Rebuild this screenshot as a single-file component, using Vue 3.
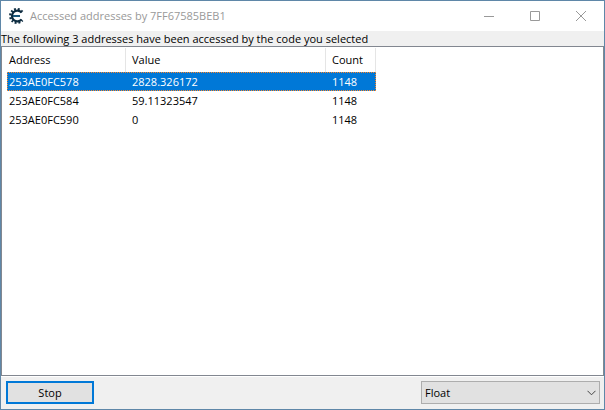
<template>
  <div class="window">
    <header class="titlebar">
      <svg class="logo" viewBox="0 0 16 16" aria-hidden="true">
        <path
          d="M13.4 3.8A6.8 6.8 0 1 0 13.4 12.2"
          fill="none"
          stroke="#0d2c40"
          stroke-width="2.4"
          stroke-dasharray="1.8 1.7"
        />
        <path
          d="M12.6 4.6A5.4 5.4 0 1 0 12.6 11.4"
          fill="none"
          stroke="#0d2c40"
          stroke-width="2.2"
        />
        <path d="M4 8h7" stroke="#17567a" stroke-width="2" />
      </svg>
      <h1 class="title">Accessed addresses by 7FF67585BEB1</h1>
      <div class="controls">
        <button type="button" class="control" aria-label="Minimize">
          <svg class="glyph" viewBox="0 0 10 10"><path d="M0 5.5h10" /></svg>
        </button>
        <button type="button" class="control" aria-label="Maximize">
          <svg class="glyph" viewBox="0 0 10 10"><path d="M.5 .5h9v9h-9z" /></svg>
        </button>
        <button type="button" class="control" aria-label="Close">
          <svg class="glyph" viewBox="0 0 10 10"><path d="M0 0L10 10M10 0L0 10" /></svg>
        </button>
      </div>
    </header>

    <p class="info">The following {{ rows.length }} addresses have been accessed by the code you selected</p>

    <main class="list">
      <table class="table">
        <thead>
          <tr>
            <th class="col-address">Address</th>
            <th class="col-value">Value</th>
            <th class="col-count">Count</th>
          </tr>
        </thead>
        <tbody>
          <tr
            v-for="row in rows"
            :key="row.address"
            :class="{ selected: row.address === selected }"
            @click="selected = row.address"
          >
            <td>{{ row.address }}</td>
            <td>{{ row.value }}</td>
            <td>{{ row.count }}</td>
          </tr>
        </tbody>
      </table>
    </main>

    <footer class="footer">
      <button type="button" class="stop">Stop</button>
      <div class="type">
        <select v-model="valueType" class="type-select" aria-label="Value type">
          <option v-for="t in valueTypes" :key="t">{{ t }}</option>
        </select>
        <svg class="chevron" viewBox="0 0 9 6" aria-hidden="true"><path d="M.5 .8l4 4l4-4" /></svg>
      </div>
    </footer>
  </div>
</template>

<script setup>
import { ref } from 'vue'

const rows = [
  { address: '253AE0FC578', value: '2828.326172', count: 1148 },
  { address: '253AE0FC584', value: '59.11323547', count: 1148 },
  { address: '253AE0FC590', value: '0', count: 1148 }
]

const valueTypes = ['Byte', '2 Bytes', '4 Bytes', '8 Bytes', 'Float', 'Double']

const selected = ref('253AE0FC578')
const valueType = ref('Float')
</script>

<style>
body {
  margin: 0;
}
</style>

<style scoped>
.window {
  box-sizing: border-box;
  min-height: 100vh;
  display: flex;
  flex-direction: column;
  border: 1px solid #5f87a8;
  background: #f0f0f0;
  color: #000;
  font-family: 'Open Sans', 'Noto Sans', sans-serif;
  font-size: 11px;
  line-height: 16px;
}

.titlebar {
  display: flex;
  align-items: center;
  height: 30px;
  padding-left: 8px;
  background: #fff;
}

.logo {
  width: 16px;
  height: 16px;
  margin-right: 5px;
}

.title {
  flex: 1;
  margin: 0;
  font-size: 11px;
  font-weight: 400;
  color: #999;
  white-space: nowrap;
}

.controls {
  display: flex;
}

.control {
  display: flex;
  align-items: center;
  justify-content: center;
  width: 46px;
  height: 30px;
  padding: 0;
  border: 0;
  background: transparent;
}

.glyph {
  width: 10px;
  height: 10px;
  fill: none;
  stroke: #999;
}

.info {
  margin: 0;
  height: 15px;
  line-height: 15px;
  white-space: nowrap;
}

.list {
  flex: 1;
  padding: 1px 5px;
  border: 1px solid #828790;
  background: #fff;
}

.table {
  border-collapse: collapse;
  table-layout: fixed;
  width: 369px;
}

th,
td {
  box-sizing: border-box;
  padding: 0 0 0 6px;
  text-align: left;
  font-weight: 400;
  white-space: nowrap;
}

th {
  height: 24px;
  box-shadow: inset -1px 0 #e5e5e5;
}

td {
  height: 19px;
}

th:first-child,
td:first-child {
  padding-left: 2px;
}

.col-address {
  width: 119px;
}

.col-value {
  width: 200px;
}

.col-count {
  width: 50px;
}

/* one-pixel dotted focus rectangle around the selected row */
.selected {
  background:
    repeating-linear-gradient(90deg, #ff8728 0 1px, #0078d7 1px 2px) top / 100% 1px no-repeat,
    repeating-linear-gradient(90deg, #ff8728 0 1px, #0078d7 1px 2px) bottom / 100% 1px no-repeat,
    repeating-linear-gradient(#ff8728 0 1px, #0078d7 1px 2px) left / 1px 100% no-repeat,
    repeating-linear-gradient(#ff8728 0 1px, #0078d7 1px 2px) right / 1px 100% no-repeat,
    #0078d7;
  color: #fff;
}

.footer {
  display: flex;
  align-items: center;
  justify-content: space-between;
  height: 33px;
  padding: 0 4px 0 5px;
  box-shadow: inset 0 1px #fff;
}

.stop {
  width: 88px;
  height: 23px;
  padding: 0;
  border: 2px solid #0078d7;
  background: #e1e1e1;
  color: #000;
  font: inherit;
}

.type {
  position: relative;
  width: 179px;
}

.type-select {
  display: block;
  width: 100%;
  height: 23px;
  padding: 0 20px 0 3px;
  border: 1px solid #adadad;
  border-radius: 0;
  background: #e1e1e1;
  color: #000;
  font: inherit;
  appearance: none;
}

.chevron {
  position: absolute;
  top: 9px;
  right: 4px;
  width: 9px;
  height: 6px;
  fill: none;
  stroke: #444;
  pointer-events: none;
}
</style>
